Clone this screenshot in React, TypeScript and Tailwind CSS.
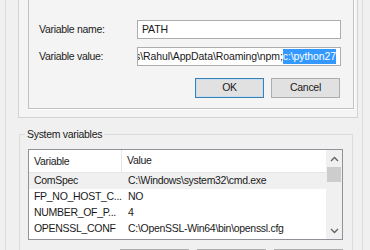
import { ReactNode } from 'react';

const font = "font-['Liberation_Sans',Arial,sans-serif] text-[10.5px] tracking-[-0.3px] text-[#1a1a1a]";

const rows = [
  { name: 'ComSpec', value: 'C:\\Windows\\system32\\cmd.exe', selected: true },
  { name: 'FP_NO_HOST_C...', value: 'NO' },
  { name: 'NUMBER_OF_P...', value: '4' },
  { name: 'OPENSSL_CONF', value: 'C:\\OpenSSL-Win64\\bin\\openssl.cfg' },
];

const TextBox = ({ children }: { children: ReactNode }) => (
  <div className="flex h-[19px] w-[204px] items-center justify-end overflow-hidden whitespace-nowrap border border-[#adadad] bg-white pr-[4px] tracking-[-0.1px]">
    {children}
  </div>
);

const WinButton = ({ label, focused }: { label?: string; focused?: boolean }) => (
  <button
    className={`flex h-[20px] w-[69px] items-center justify-center border bg-[#e1e1e1] ${
      focused ? 'border-[#3c7fb1] shadow-[inset_0_0_0_1px_#c4dff4]' : 'border-[#adadad]'
    }`}
  >
    {label}
  </button>
);

const Chevron = ({ up }: { up?: boolean }) => (
  <svg width="9" height="6" viewBox="0 0 9 6">
    <polyline
      points={up ? '1,5 4.5,1.5 8,5' : '1,1 4.5,4.5 8,1'}
      fill="none"
      stroke="#606060"
      strokeWidth="1.3"
    />
  </svg>
);

export default function App() {
  return (
    <div className={`flex h-[250px] w-[370px] overflow-hidden bg-[#f0f0f0] pl-[5px] ${font}`}>
      {/* environment variables window behind */}
      <div className="flex h-full w-[358px] flex-col border-x border-[#dadada] pl-[12px]">
        {/* edit system variable dialog */}
        <div className="flex h-[118px] w-[340px] shrink-0 border border-t-0 border-[#d3d3d3] bg-[#f4f4f4] pb-[8px] pl-[9px] pr-[3px]">
          <div className="flex flex-1 flex-col border border-t-0 border-[#c2c2c2] pl-[10px] pr-[12px] pt-[20px] shadow-[1px_1px_0_#ffffff]">
            <div className="flex items-center justify-between">
              <span>Variable name:</span>
              <TextBox>
                <span className="mr-auto pl-[4px]">PATH</span>
              </TextBox>
            </div>
            <div className="mt-[8px] flex items-center justify-between">
              <span>Variable value:</span>
              <TextBox>
                <span>C:\Users\Rahul\AppData\Roaming\npm;</span>
                <span className="bg-[#3399ff] text-white">c:\python27</span>
                <span className="h-[13px] w-px bg-black" />
              </TextBox>
            </div>
            <div className="mt-[12px] flex justify-end gap-[7px] pr-[1px]">
              <WinButton label="OK" focused />
              <WinButton label="Cancel" />
            </div>
          </div>
        </div>

        {/* system variables group */}
        <div className="relative ml-[1px] mt-[16px] flex w-[334px] flex-col border border-[#dcdcdc] pl-[8px] pr-[9px] pt-[14px]">
          <span className="absolute left-[5px] top-[-8px] bg-[#f0f0f0] px-[2px]">System variables</span>
          <div className="flex h-[91px] border border-[#8f9399] bg-white">
            <div className="flex flex-1 flex-col">
              <div className="flex h-[23px] shrink-0 items-center border-b border-[#e5e5e5]">
                <span className="w-[93px] border-r border-[#e5e5e5] pl-[5px] leading-[22px]">Variable</span>
                <span className="pl-[5px]">Value</span>
              </div>
              {rows.map((r) => (
                <div
                  key={r.name}
                  className={`flex h-[16px] shrink-0 items-center whitespace-nowrap ${r.selected ? 'bg-[#f0f0f0]' : ''}`}
                >
                  <span className="w-[93px] pl-[5px]">{r.name}</span>
                  <span className="pl-[6px]">{r.value}</span>
                </div>
              ))}
            </div>
            <div className="flex w-[16px] flex-col items-center bg-[#f0f0f0]">
              <div className="flex h-[17px] items-center">
                <Chevron up />
              </div>
              <div className="h-[15px] w-[14px] bg-[#cdcdcd]" />
              <div className="flex-1" />
              <div className="flex h-[17px] items-center">
                <Chevron />
              </div>
            </div>
          </div>
          <div className="mt-[9px] flex justify-end gap-[8px]">
            <WinButton label="New..." />
            <WinButton label="Edit..." />
            <WinButton label="Delete" />
          </div>
        </div>
      </div>
    </div>
  );
}
